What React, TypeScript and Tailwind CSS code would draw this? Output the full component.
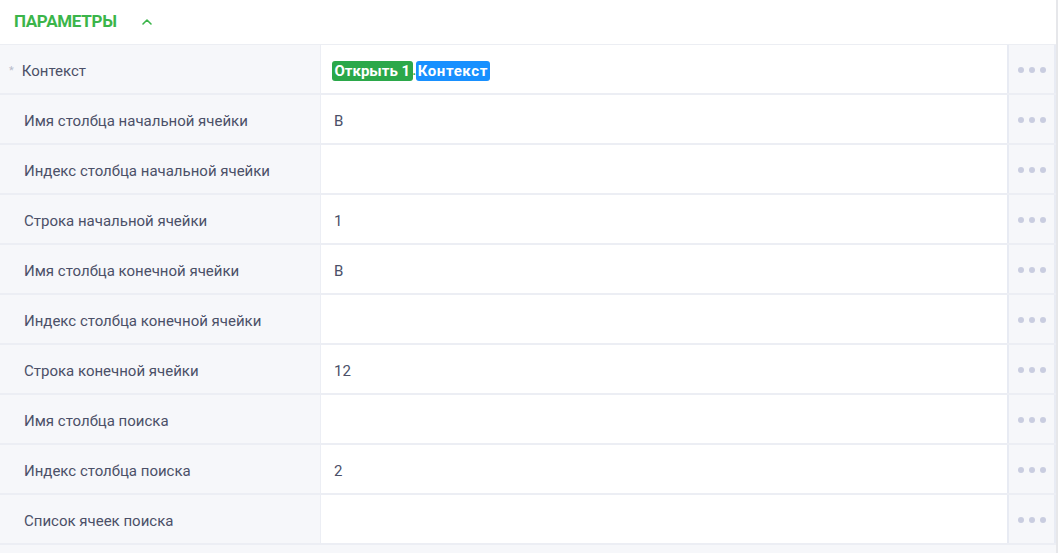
import React, { useState } from 'react';

interface Param {
  label: string;
  value?: React.ReactNode;
  required?: boolean;
}

const params: Param[] = [
  {
    label: 'Контекст',
    required: true,
    value: (
      <span className="-ml-[2px] flex items-center">
        <span className="rounded-[3px] bg-[#2ba84a] px-[2.5px] text-[15px] font-bold leading-[20px] text-white">
          Открыть 1
        </span>
        <span className="flex w-[3px] justify-center text-[12px] font-bold leading-[20px] text-[#2ba84a]">.</span>
        <span className="rounded-[3px] bg-[#1890ff] px-[2px] text-[15px] font-bold leading-[20px] tracking-[0.6px] text-white">
          Контекст
        </span>
      </span>
    ),
  },
  { label: 'Имя столбца начальной ячейки', value: 'B' },
  { label: 'Индекс столбца начальной ячейки' },
  { label: 'Строка начальной ячейки', value: '1' },
  { label: 'Имя столбца конечной ячейки', value: 'B' },
  { label: 'Индекс столбца конечной ячейки' },
  { label: 'Строка конечной ячейки', value: '12' },
  { label: 'Имя столбца поиска' },
  { label: 'Индекс столбца поиска', value: '2' },
  { label: 'Список ячеек поиска' },
];

const Dots = () => (
  <span className="flex items-center gap-[5px]">
    <span className="h-[6px] w-[6px] rounded-full bg-[#c9cde0]" />
    <span className="h-[6px] w-[6px] rounded-full bg-[#c9cde0]" />
    <span className="h-[6px] w-[6px] rounded-full bg-[#c9cde0]" />
  </span>
);

export default function App() {
  const [open, setOpen] = useState(true);

  return (
    <div
      className="flex h-[553px] w-[1061px] overflow-hidden bg-white text-[15px] text-[#4b5068]"
      style={{ fontFamily: 'Roboto, "Noto Sans", sans-serif' }}
    >
      <div className="flex w-[1056px] flex-col">
        {/* Section header */}
        <div className="flex h-[45px] shrink-0 items-center border-b border-[#eceef3] pl-[14px]">
          <span className="text-[17px] font-bold tracking-[-0.3px] text-[#3bb54a]">ПАРАМЕТРЫ</span>
          <button className="ml-[24px] flex items-center text-[#3bb54a]" onClick={() => setOpen(!open)}>
            <svg width="12" height="8" viewBox="0 0 12 8" fill="none">
              <path
                d={open ? 'M2 6l4-4 4 4' : 'M2 2l4 4 4-4'}
                stroke="currentColor"
                strokeWidth="1.6"
                strokeLinecap="round"
                strokeLinejoin="round"
              />
            </svg>
          </button>
        </div>

        {/* Parameter rows */}
        {open && (
          <div className="flex flex-col">
            {params.map((p) => (
              <div
                key={p.label}
                className="grid h-[50px] grid-cols-[320px_1fr_49px] border-b-2 border-[#eceef4]"
              >
                <div className="flex items-center bg-[#f6f7fa] pl-[24px] pt-[4px]">
                  {p.required && (
                    <span className="-ml-[15px] mr-[8px] text-[11px] text-[#b8bccb]">*</span>
                  )}
                  <span>{p.label}</span>
                </div>
                <div className="flex items-center border-l border-[#eceef4] bg-white pl-[13px] pt-[4px]">
                  {p.value}
                </div>
                <div className="flex items-center justify-center border-x-2 border-[#e8ebf3] bg-[#f6f7fa] pt-[2px]">
                  <Dots />
                </div>
              </div>
            ))}
          </div>
        )}
        <div className="flex-1 bg-[#f6f7fa]" />
      </div>
      <div className="w-[2px] bg-[#e6e7ea]" />
      <div className="flex-1 bg-white" />
    </div>
  );
}
